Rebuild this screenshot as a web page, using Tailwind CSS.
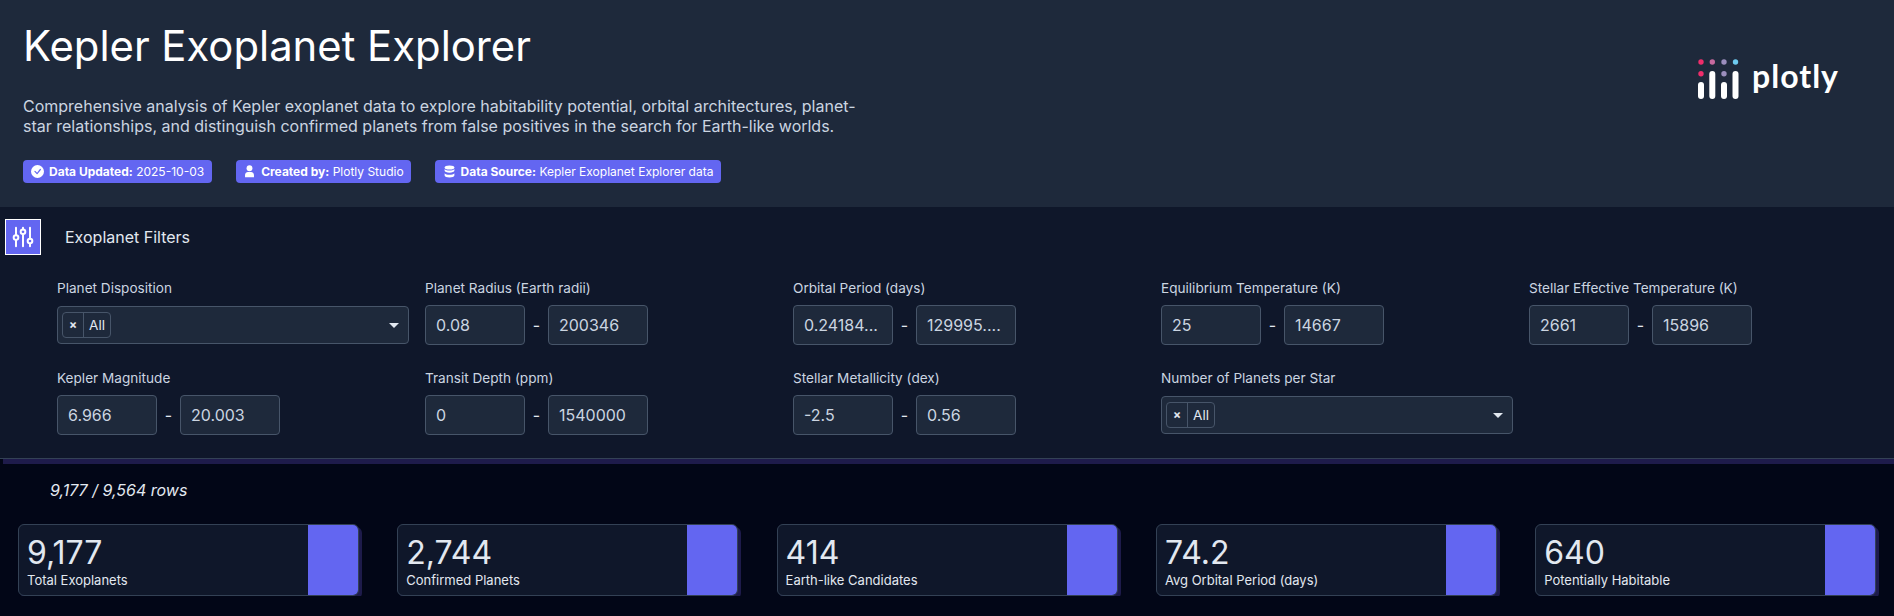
<!DOCTYPE html>
<html lang="en">
<head>
    <meta charset="UTF-8">
    <meta name="viewport" content="width=device-width, initial-scale=1.0">
    <title>Kepler Exoplanet Explorer</title>
    <script src="https://cdn.jsdelivr.net/npm/@tailwindcss/browser@4"></script>
</head>
<body class="bg-[#020617] font-['Inter',sans-serif] text-[#e2e8f0] overflow-hidden">
    <!-- Header -->
    <header class="h-[207px] bg-[#1e293b] flex justify-between">
        <div class="pl-[23px] w-[880px]">
            <h1 class="pt-[19px] text-[41.8px] leading-[54px] text-white">Kepler Exoplanet Explorer</h1>
            <p class="mt-[23px] text-[16px] leading-[20px] text-[#cbd5e1]">Comprehensive analysis of Kepler exoplanet data to explore habitability potential, orbital architectures, planet-star relationships, and distinguish confirmed planets from false positives in the search for Earth-like worlds.</p>
            <div class="mt-[24px] flex gap-6 text-white text-[12px] leading-none">
                <span class="h-[23px] px-2 flex items-center gap-[5px] rounded bg-[#6366f1]">
                    <svg class="w-[13px] h-[13px]" viewBox="0 0 16 16" fill="#fff"><path d="M16 8A8 8 0 1 1 0 8a8 8 0 0 1 16 0zm-3.97-3.03a.75.75 0 0 0-1.08.02L7.47 9.42 5.38 7.33a.75.75 0 0 0-1.06 1.06l2.64 2.65a.75.75 0 0 0 1.08-.02l3.99-5a.75.75 0 0 0 0-1.05z"/></svg>
                    <span><b class="font-bold">Data Updated:</b> 2025-10-03</span>
                </span>
                <span class="h-[23px] px-[7px] flex items-center gap-[5px] rounded bg-[#6366f1]">
                    <svg class="w-[13px] h-[13px]" viewBox="0 0 16 16" fill="#fff"><circle cx="8" cy="4" r="3.6"/><path d="M2.500 15v-2.600C2.500 10 4.400 8.600 6 8.600h4c1.600 0 3.500 1.400 3.500 3.800V15z"/></svg>
                    <span><b class="font-bold">Created by:</b> Plotly Studio</span>
                </span>
                <span class="h-[23px] px-2 flex items-center gap-[5px] rounded bg-[#6366f1]">
                    <svg class="w-[13px] h-[13px]" viewBox="0 0 16 16" fill="#fff"><ellipse cx="8" cy="3" rx="6" ry="2.500"/><path d="M2 5v2.200C2 8.600 4.700 9.500 8 9.500s6-.9 6-2.300V5c-1 1.300-3.500 1.900-6 1.900S3 6.300 2 5z"/><path d="M2 10v3c0 1.400 2.700 2.500 6 2.500s6-1.100 6-2.500v-3c-1 1.300-3.500 1.900-6 1.900S3 11.300 2 10z"/></svg>
                    <span><b class="font-bold">Data Source:</b> Kepler Exoplanet Explorer data</span>
                </span>
            </div>
        </div>
        <!-- Logo -->
        <div class="mr-[55px] mt-[59px] flex items-start gap-[13px] h-[44px]">
            <svg class="w-[41px] h-[40px]" viewBox="0 0 41 40">
                <circle cx="3" cy="3" r="2.700" fill="#ef2d6b"/>
                <circle cx="14.300" cy="3" r="2.700" fill="#c76a9f"/>
                <circle cx="26" cy="3" r="2.700" fill="#9b8ebd"/>
                <circle cx="37.500" cy="3" r="2.700" fill="#6ecbf0"/>
                <circle cx="3" cy="14.700" r="2.700" fill="#ef2d6b"/>
                <circle cx="26" cy="14.700" r="2.700" fill="#9b8ebd"/>
                <rect x="0" y="23" width="6" height="17" rx="3" fill="#fff"/>
                <rect x="11.300" y="12" width="6" height="28" rx="3" fill="#fff"/>
                <rect x="23" y="23" width="6" height="17" rx="3" fill="#fff"/>
                <rect x="34.500" y="12" width="6" height="28" rx="3" fill="#fff"/>
            </svg>
            <span class="-mt-px text-white font-['Lato',sans-serif] font-bold text-[32px] leading-[36px] tracking-[1px]">plotly</span>
        </div>
    </header>

    <!-- Filters -->
    <section class="h-[252px] bg-[#0f172a] border-b border-[#334155] shadow-[3px_5px_0_0_#1e1b4b]">
        <div class="flex items-center pt-3 pl-[5px] h-[48px]">
            <span class="w-[36px] h-[36px] flex items-center justify-center bg-[#6366f1] border border-white">
                <svg class="w-[28px] h-[28px]" viewBox="0 0 24 24" fill="none" stroke="#fff" stroke-width="1.700" stroke-linecap="round">
                    <path d="M6 4v6.500M6 14.500V20M12 4v1.500M12 9.500V20M18 4v9.500M18 17.500V20"/>
                    <circle cx="6" cy="12.500" r="2"/><circle cx="12" cy="7.500" r="2"/><circle cx="18" cy="15.500" r="2"/>
                </svg>
            </span>
            <h2 class="ml-6 text-[16px] text-[#e2e8f0]">Exoplanet Filters</h2>
        </div>

        <div class="mt-[23px] pl-[57px] grid grid-cols-[352px_352px_352px_352px_352px] gap-x-4 gap-y-[23px] text-[13.6px]">
            <div>
                <label class="block h-[27px] leading-[20px] text-[#cbd5e1]">Planet Disposition</label>
                <div class="mt-px w-[352px] h-[38px] pl-1 pr-2 flex items-center justify-between rounded bg-[#1e293b] border border-[#475569]">
                    <span class="flex h-[26px] border border-[#475569] rounded-sm">
                        <span class="w-[21px] flex items-center justify-center border-r border-[#475569] text-[12px] font-bold">×</span>
                        <span class="px-[5px] flex items-center">All</span>
                    </span>
                    <span class="w-0 h-0 mr-[1px] border-x-[5px] border-t-[5px] border-x-transparent border-t-[#e2e8f0]"></span>
                </div>
            </div>
            <div>
                <label class="block h-[27px] leading-[20px] text-[#cbd5e1]">Planet Radius (Earth radii)</label>
                <div class="flex items-center text-[16px]">
                    <span class="w-[100px] h-[40px] px-[10px] flex items-center rounded bg-[#1e293b] border border-[#475569] text-[#cbd5e1]">0.08</span>
                    <span class="w-[23px] text-center">-</span>
                    <span class="w-[100px] h-[40px] px-[10px] flex items-center rounded bg-[#1e293b] border border-[#475569] text-[#cbd5e1]">200346</span>
                </div>
            </div>
            <div>
                <label class="block h-[27px] leading-[20px] text-[#cbd5e1]">Orbital Period (days)</label>
                <div class="flex items-center text-[16px]">
                    <span class="w-[100px] h-[40px] px-[10px] flex items-center rounded bg-[#1e293b] border border-[#475569] text-[#cbd5e1]">0.24184...</span>
                    <span class="w-[23px] text-center">-</span>
                    <span class="w-[100px] h-[40px] px-[10px] flex items-center rounded bg-[#1e293b] border border-[#475569] text-[#cbd5e1]">129995....</span>
                </div>
            </div>
            <div>
                <label class="block h-[27px] leading-[20px] text-[#cbd5e1]">Equilibrium Temperature (K)</label>
                <div class="flex items-center text-[16px]">
                    <span class="w-[100px] h-[40px] px-[10px] flex items-center rounded bg-[#1e293b] border border-[#475569] text-[#cbd5e1]">25</span>
                    <span class="w-[23px] text-center">-</span>
                    <span class="w-[100px] h-[40px] px-[10px] flex items-center rounded bg-[#1e293b] border border-[#475569] text-[#cbd5e1]">14667</span>
                </div>
            </div>
            <div>
                <label class="block h-[27px] leading-[20px] text-[#cbd5e1]">Stellar Effective Temperature (K)</label>
                <div class="flex items-center text-[16px]">
                    <span class="w-[100px] h-[40px] px-[10px] flex items-center rounded bg-[#1e293b] border border-[#475569] text-[#cbd5e1]">2661</span>
                    <span class="w-[23px] text-center">-</span>
                    <span class="w-[100px] h-[40px] px-[10px] flex items-center rounded bg-[#1e293b] border border-[#475569] text-[#cbd5e1]">15896</span>
                </div>
            </div>
            <div>
                <label class="block h-[27px] leading-[20px] text-[#cbd5e1]">Kepler Magnitude</label>
                <div class="flex items-center text-[16px]">
                    <span class="w-[100px] h-[40px] px-[10px] flex items-center rounded bg-[#1e293b] border border-[#475569] text-[#cbd5e1]">6.966</span>
                    <span class="w-[23px] text-center">-</span>
                    <span class="w-[100px] h-[40px] px-[10px] flex items-center rounded bg-[#1e293b] border border-[#475569] text-[#cbd5e1]">20.003</span>
                </div>
            </div>
            <div>
                <label class="block h-[27px] leading-[20px] text-[#cbd5e1]">Transit Depth (ppm)</label>
                <div class="flex items-center text-[16px]">
                    <span class="w-[100px] h-[40px] px-[10px] flex items-center rounded bg-[#1e293b] border border-[#475569] text-[#cbd5e1]">0</span>
                    <span class="w-[23px] text-center">-</span>
                    <span class="w-[100px] h-[40px] px-[10px] flex items-center rounded bg-[#1e293b] border border-[#475569] text-[#cbd5e1]">1540000</span>
                </div>
            </div>
            <div>
                <label class="block h-[27px] leading-[20px] text-[#cbd5e1]">Stellar Metallicity (dex)</label>
                <div class="flex items-center text-[16px]">
                    <span class="w-[100px] h-[40px] px-[10px] flex items-center rounded bg-[#1e293b] border border-[#475569] text-[#cbd5e1]">-2.5</span>
                    <span class="w-[23px] text-center">-</span>
                    <span class="w-[100px] h-[40px] px-[10px] flex items-center rounded bg-[#1e293b] border border-[#475569] text-[#cbd5e1]">0.56</span>
                </div>
            </div>
            <div>
                <label class="block h-[27px] leading-[20px] text-[#cbd5e1]">Number of Planets per Star</label>
                <div class="mt-px w-[352px] h-[38px] pl-1 pr-2 flex items-center justify-between rounded bg-[#1e293b] border border-[#475569]">
                    <span class="flex h-[26px] border border-[#475569] rounded-sm">
                        <span class="w-[21px] flex items-center justify-center border-r border-[#475569] text-[12px] font-bold">×</span>
                        <span class="px-[5px] flex items-center">All</span>
                    </span>
                    <span class="w-0 h-0 mr-[1px] border-x-[5px] border-t-[5px] border-x-transparent border-t-[#e2e8f0]"></span>
                </div>
            </div>
        </div>
    </section>

    <!-- Summary -->
    <main>
        <p class="mt-[21px] pl-[50px] h-[20px] text-[16px] leading-[20px] italic text-[#e2e8f0]">9,177 / 9,564 rows</p>
        <div class="mt-[24px] pl-[18px] flex gap-[38.300px]">
            <div class="w-[341px] h-[72px] flex justify-between rounded-md bg-[#0f172a] border border-[#334155] shadow-[3px_3px_0_0_#1e1b4b] overflow-hidden">
                <div class="pl-[8px] pt-[9px]">
                    <div class="text-[32px] leading-[38px] text-[#e2e8f0]">9,177</div>
                    <div class="text-[13px] leading-[16px] text-[#e2e8f0]">Total Exoplanets</div>
                </div>
                <div class="w-[50px] bg-[#6366f1]"></div>
            </div>
            <div class="w-[341px] h-[72px] flex justify-between rounded-md bg-[#0f172a] border border-[#334155] shadow-[3px_3px_0_0_#1e1b4b] overflow-hidden">
                <div class="pl-[8px] pt-[9px]">
                    <div class="text-[32px] leading-[38px] text-[#e2e8f0]">2,744</div>
                    <div class="text-[13px] leading-[16px] text-[#e2e8f0]">Confirmed Planets</div>
                </div>
                <div class="w-[50px] bg-[#6366f1]"></div>
            </div>
            <div class="w-[341px] h-[72px] flex justify-between rounded-md bg-[#0f172a] border border-[#334155] shadow-[3px_3px_0_0_#1e1b4b] overflow-hidden">
                <div class="pl-[8px] pt-[9px]">
                    <div class="text-[32px] leading-[38px] text-[#e2e8f0]">414</div>
                    <div class="text-[13px] leading-[16px] text-[#e2e8f0]">Earth-like Candidates</div>
                </div>
                <div class="w-[50px] bg-[#6366f1]"></div>
            </div>
            <div class="w-[341px] h-[72px] flex justify-between rounded-md bg-[#0f172a] border border-[#334155] shadow-[3px_3px_0_0_#1e1b4b] overflow-hidden">
                <div class="pl-[8px] pt-[9px]">
                    <div class="text-[32px] leading-[38px] text-[#e2e8f0]">74.2</div>
                    <div class="text-[13px] leading-[16px] text-[#e2e8f0]">Avg Orbital Period (days)</div>
                </div>
                <div class="w-[50px] bg-[#6366f1]"></div>
            </div>
            <div class="w-[341px] h-[72px] flex justify-between rounded-md bg-[#0f172a] border border-[#334155] shadow-[3px_3px_0_0_#1e1b4b] overflow-hidden">
                <div class="pl-[8px] pt-[9px]">
                    <div class="text-[32px] leading-[38px] text-[#e2e8f0]">640</div>
                    <div class="text-[13px] leading-[16px] text-[#e2e8f0]">Potentially Habitable</div>
                </div>
                <div class="w-[50px] bg-[#6366f1]"></div>
            </div>
        </div>
    </main>
</body>
</html>
